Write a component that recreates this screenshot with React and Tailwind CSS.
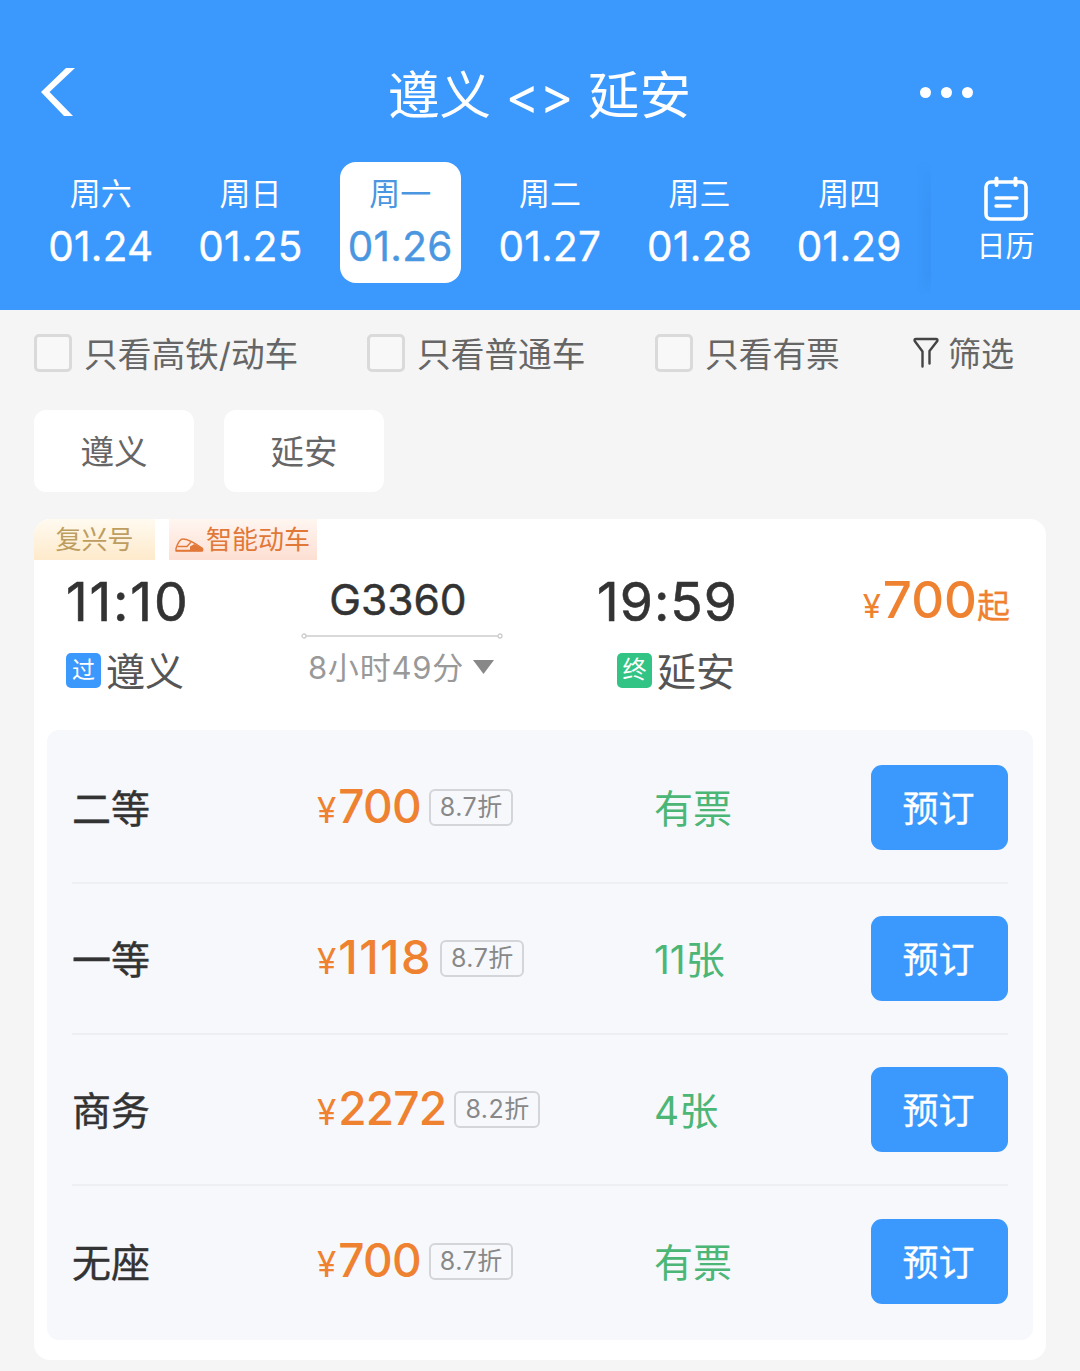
const DAYS = [
  ['周六', '01.24'],
  ['周日', '01.25'],
  ['周一', '01.26'],
  ['周二', '01.27'],
  ['周三', '01.28'],
  ['周四', '01.29'],
];

const SEATS = [
  { name: '二等', price: '700', off: '8.7折', left: '有票' },
  { name: '一等', price: '1118', off: '8.7折', left: '11张', wide: true },
  { name: '商务', price: '2272', off: '8.2折', left: '4张' },
  { name: '无座', price: '700', off: '8.7折', left: '有票' },
];

function Header() {
  return (
    <header className="flex h-[310px] flex-col bg-[#3b98fc] text-white">
      <div className="mt-[62px] flex h-[64px] items-center">
        <svg className="ml-[40px] h-[48px] w-[36px] -translate-y-[2px]" viewBox="0 0 36 48">
          <path d="M26 0H35L9.500 24L33 48H24L1 24Z" fill="#fff" />
        </svg>
        <h1 className="ml-[312px] w-[302px] translate-y-px text-[51.5px] leading-[64px] font-normal whitespace-nowrap">
          遵义 &lt;&gt; 延安
        </h1>
        <div className="ml-[230px] flex -translate-y-[2px] gap-[10px]">
          <i className="size-[11px] rounded-full bg-white" />
          <i className="size-[11px] rounded-full bg-white" />
          <i className="size-[11px] rounded-full bg-white" />
        </div>
      </div>
      <nav className="mt-[36px] flex h-[121px]">
        <div className="ml-[26px] flex w-[905px]">
          {DAYS.map(([day, date]) => (
            <div key={date} className="flex w-[149.7px] shrink-0 justify-center">
              <div
                className={
                  date === '01.26'
                    ? 'flex h-[121px] w-[121px] flex-col items-center rounded-2xl bg-white text-[#4a96e0]'
                    : 'flex h-[121px] w-[121px] flex-col items-center'
                }
              >
                <span className="mt-[14px] h-[39px] text-[31px] leading-[36px]">{day}</span>
                <span className="text-[40.5px] leading-[64px] tracking-[0.3px] [-webkit-text-stroke:0.4px]">{date}</span>
              </div>
            </div>
          ))}
        </div>
        <div className="-ml-[14px] h-[132px] w-[14px] bg-linear-to-r from-transparent to-[#3893f6] [mask-image:linear-gradient(transparent,black_40%,black_85%,transparent)]" />
        <div className="flex flex-1 flex-col items-center">
          <svg className="mt-[13px] h-[46px] w-[46px]" viewBox="0 0 46 46" fill="none" stroke="#fff" strokeLinecap="round">
            <rect x="3" y="7" width="40" height="37" rx="5" strokeWidth="3.600" />
            <path d="M13.500 3.500V10M32.500 3.500V10" strokeWidth="4" />
            <path d="M13 23H34M13 31H27" strokeWidth="3.400" />
          </svg>
          <span className="mt-[7px] text-[29px] leading-[38px]">日历</span>
        </div>
      </nav>
    </header>
  );
}

function Check({ label, className }) {
  return (
    <label className={className}>
      <i className="mr-[12px] size-[38px] shrink-0 rounded-[5px] border-[3px] border-[#dadada] bg-[#f8f8f8]" />
      <span className="translate-y-[1.5px]">{label}</span>
    </label>
  );
}

function Filters() {
  return (
    <>
      <div className="flex h-[86px] items-center pl-[34px] text-[33.7px] whitespace-nowrap text-[#666]">
        <Check label="只看高铁/动车" className="flex w-[333px] items-center" />
        <Check label="只看普通车" className="flex w-[288px] items-center" />
        <Check label="只看有票" className="flex w-[258px] items-center" />
        <svg className="h-[32px] w-[26px]" viewBox="0 0 26 32" fill="none" stroke="#444" strokeWidth="2.400" strokeLinecap="round" strokeLinejoin="round">
          <path d="M9.500 29.500V14.500L1.700 4Q1 2 3 2H23Q25 2 24.300 4L16.500 14V26.500" />
        </svg>
        <span className="ml-[9px] translate-y-[2px] text-[33px]">筛选</span>
      </div>
      <div className="mt-[14px] flex gap-[30px] pl-[34px] text-[33.5px] text-[#666]">
        <button className="h-[82px] w-[160px] rounded-xl bg-white pt-[2px]">遵义</button>
        <button className="h-[82px] w-[160px] rounded-xl bg-white pt-[2px]">延安</button>
      </div>
    </>
  );
}

function Trip() {
  return (
    <div className="flex h-[170px]">
      <div className="w-[267px] pl-[32px]">
        <div className="h-[84px] text-[53.5px] leading-[84px] tracking-[1.8px] text-[#333] [-webkit-text-stroke:0.6px]">11:10</div>
        <div className="flex h-[54px] items-center text-[39px] text-[#555]">
          <span className="mr-[5px] flex size-[35px] -translate-y-px items-center justify-center rounded-[5px] bg-[#3b98fc] text-[23px] text-white">过</span>
          <span className="translate-y-px">遵义</span>
        </div>
      </div>
      <div className="flex w-[202px] flex-col items-center">
        <div className="h-[73px] -translate-x-[4px] text-[42.5px] leading-[80px] text-[#333] [-webkit-text-stroke:0.5px]">G3360</div>
        <svg className="h-[6px] w-[202px]" viewBox="0 0 202 6" fill="none" stroke="#ccc" strokeWidth="1.300">
          <circle cx="3" cy="3" r="2" />
          <circle cx="199" cy="3" r="2" />
          <path d="M5 3H197" />
        </svg>
        <div className="mt-[4px] flex h-[50px] -translate-x-px items-center text-[31px] tracking-[0.8px] whitespace-nowrap text-[#999]">
          8小时49分
          <svg className="ml-[9px] h-[14px] w-[21px] -translate-y-px" viewBox="0 0 21 14">
            <path d="M0 0H21L10.500 14Z" fill="#888" />
          </svg>
        </div>
      </div>
      <div className="w-[240px] pl-[60px]">
        <div className="h-[84px] pl-[34px] text-[53.5px] leading-[84px] tracking-[1px] text-[#333] [-webkit-text-stroke:0.6px]">19:59</div>
        <div className="ml-[20px] flex h-[54px] items-center pl-[34px] text-[39px] text-[#555]">
          <span className="mr-[5px] flex size-[35px] -translate-y-px items-center justify-center rounded-[5px] bg-[#31c484] text-[24px] text-white">终</span>
          <span className="translate-y-px">延安</span>
        </div>
      </div>
      <div className="flex flex-1 items-baseline justify-end pr-[36px] leading-[82px] text-[#ef8230]">
        <span className="mr-[2px] -translate-y-px text-[33px]">¥</span>
        <span className="-translate-y-px text-[51px] font-medium">700</span>
        <span className="-translate-y-px text-[33px] [-webkit-text-stroke:0.3px]">起</span>
      </div>
    </div>
  );
}

function SeatRow({ seat, last }) {
  return (
    <div className={last ? 'flex h-[151px] items-center' : 'flex h-[151px] items-center border-b-2 border-[#edeff3]'}>
      <div className="w-[245px] translate-y-[2px] text-[39px] text-[#333] [-webkit-text-stroke:0.4px]">{seat.name}</div>
      <div className="flex w-[337px] items-center">
        <div className="flex -translate-y-px items-baseline text-[#ef8230]">
          <span className="mr-[2px] text-[35px]">¥</span>
          <span className={seat.wide ? 'text-[47px] font-medium tracking-[1.4px]' : 'text-[46px] font-medium tracking-[-0.8px]'}>{seat.price}</span>
        </div>
        <span className="ml-[8px] flex h-[37px] items-center rounded-md border-2 border-[#d3d5d8] pr-[8px] pl-[9px] text-[25px] tracking-[0.5px] text-[#888]">
          {seat.off}
        </span>
      </div>
      <div className="w-[217px] translate-y-[2px] text-[39px] text-[#4cb676]">{seat.left}</div>
      <button className="h-[85px] w-[137px] rounded-[11px] bg-[#3b98fc] pt-[2px] pr-[2px] text-[36px] text-white [-webkit-text-stroke:0.3px]">
        预订
      </button>
    </div>
  );
}

export default function App() {
  return (
    <main className="h-[1371px] w-[1080px] overflow-hidden bg-[#f5f5f5] font-['Inter','Noto_Sans_CJK_SC',sans-serif]">
      <Header />
      <Filters />
      <section className="mt-[27px] ml-[34px] h-[841px] w-[1012px] overflow-hidden rounded-2xl bg-white">
        <div className="flex h-[41px] text-[26px] leading-[42px]">
          <span className="w-[121px] bg-linear-to-b from-[#fffaf0] to-[#feeacb] text-center text-[#bd9e60]">复兴号</span>
          <span className="ml-[14px] flex w-[148px] items-center bg-linear-to-b from-[#fff6f1] to-[#fddfd3] pl-[6px] text-[#e17838]">
            <svg className="mt-[10px] mr-[2px] h-[16px] w-[29px]" viewBox="0 0 29 16" fill="none" stroke="#e17838" strokeWidth="1.400" strokeLinejoin="round">
              <path d="M1 14V11.500Q4 2 8 2Q14 2 27 11Q29 14 26 14Z" />
              <path d="M2.500 9.500H12L16 5" />
              <path d="M15 9.500L19.500 7L27 11Q29 14 26 14H15Z" fill="#e17838" stroke="none" />
              <path d="M1 13.500H28" />
            </svg>
            智能动车
          </span>
        </div>
        <Trip />
        <div className="mx-[13px] h-[610px] rounded-xl bg-[#f6f8fc] px-[25px] pt-[3px]">
          {SEATS.map((seat, i) => (
            <SeatRow key={seat.name} seat={seat} last={i === 3} />
          ))}
        </div>
      </section>
    </main>
  );
}
